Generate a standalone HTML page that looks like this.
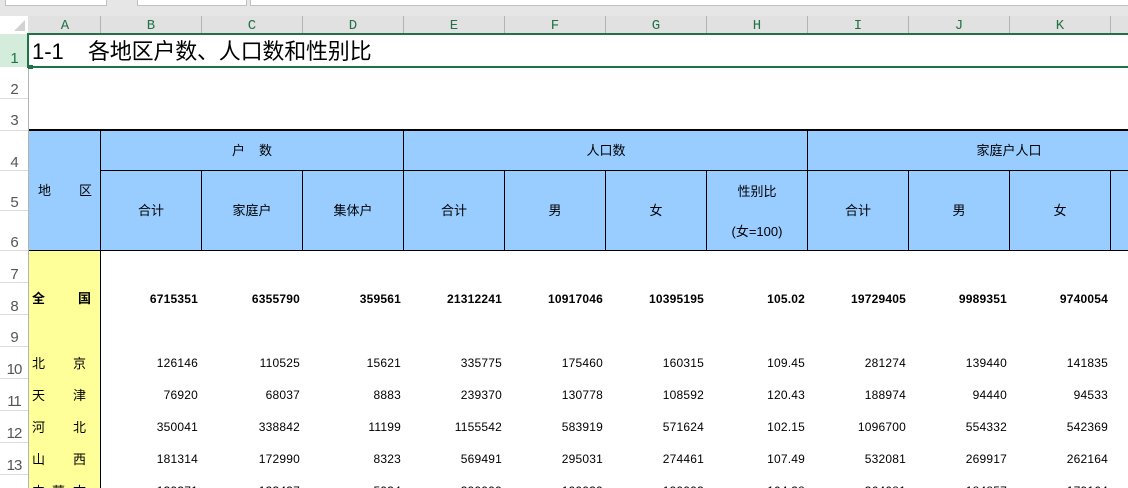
<!DOCTYPE html>
<html lang="zh">
<head>
<meta charset="utf-8">
<title>1-1 各地区户数、人口数和性别比</title>
<style>
html,body{margin:0;padding:0;background:#fff}
#p{position:relative;width:1128px;height:488px;overflow:hidden;background:#fff;font-family:"Liberation Sans","Noto Sans CJK SC",sans-serif;color:#000}
#p div,#p span{position:absolute}
.f{background:#000}
.h{background:#b4b4b4;top:16px;width:1px;height:17px}
.c{top:18px;width:30px;height:17px;text-align:center;font:14px/17px "Liberation Mono",monospace;color:#217346}
.n{left:0;width:28px;height:14px;line-height:14px;text-align:center;font-size:15px;letter-spacing:-1px;color:#555}
.s{left:0;width:28px;height:1px;background:#dadada}
.t{font-size:13px;line-height:16px;height:16px;white-space:nowrap;text-align:center}
.r{left:0;width:1128px;height:14px;font-size:12px;line-height:14px;letter-spacing:.2px}
.r span{top:0;width:96px;text-align:right;white-space:nowrap}
.r span:nth-child(1){left:102px}
.r span:nth-child(2){left:204px}
.r span:nth-child(3){left:305px}
.r span:nth-child(4){left:406px}
.r span:nth-child(5){left:507px}
.r span:nth-child(6){left:608px}
.r span:nth-child(7){left:709px}
.r span:nth-child(8){left:810px}
.r span:nth-child(9){left:911px}
.r span:nth-child(10){left:1012px}
.b{font-weight:bold}
.l{font-size:13px;line-height:16px;height:16px;white-space:nowrap}
</style>
</head>
<body>
<div id="p">
<!-- top strip -->
<div style="left:0;top:0;width:1128px;height:16px;background:#e6e6e6"></div>
<div style="left:5px;top:0;width:100px;height:5px;background:#fff;border:1px solid #c0c0c0;border-top:0"></div>
<div style="left:137px;top:0;width:108px;height:5px;background:#fff;border:1px solid #c0c0c0;border-top:0"></div>
<div style="left:250px;top:0;width:880px;height:5px;background:#fff;border:1px solid #c0c0c0;border-top:0"></div>
<!-- column header -->
<div style="left:0;top:16px;width:28px;height:17px;background:#fff"></div>
<div style="left:14px;top:20px;width:0;height:0;border-left:11px solid transparent;border-bottom:11px solid #d2d2d2"></div>
<div style="left:28px;top:16px;width:1100px;height:17px;background:#e1e1e1"></div>
<div class="h" style="left:100px"></div><div class="h" style="left:201px"></div><div class="h" style="left:302px"></div><div class="h" style="left:403px"></div><div class="h" style="left:504px"></div><div class="h" style="left:605px"></div><div class="h" style="left:706px"></div><div class="h" style="left:807px"></div><div class="h" style="left:908px"></div><div class="h" style="left:1009px"></div><div class="h" style="left:1110px"></div>
<div class="c" style="left:50px">A</div><div class="c" style="left:136px">B</div><div class="c" style="left:237px">C</div><div class="c" style="left:338px">D</div><div class="c" style="left:439px">E</div><div class="c" style="left:540px">F</div><div class="c" style="left:641px">G</div><div class="c" style="left:742px">H</div><div class="c" style="left:843px">I</div><div class="c" style="left:944px">J</div><div class="c" style="left:1045px">K</div>
<!-- row header -->
<div style="left:0;top:34px;width:28px;height:33px;background:#d3ecdc"></div>
<div style="left:28px;top:67px;width:1px;height:421px;background:#b4b4b4"></div>
<div class="s" style="top:98px"></div><div class="s" style="top:130px"></div><div class="s" style="top:170px"></div><div class="s" style="top:210px"></div><div class="s" style="top:250px"></div><div class="s" style="top:282px"></div><div class="s" style="top:314px"></div><div class="s" style="top:346px"></div><div class="s" style="top:378px"></div><div class="s" style="top:410px"></div><div class="s" style="top:442px"></div><div class="s" style="top:474px"></div>
<div class="n" style="top:52px;color:#217346">1</div><div class="n" style="top:83px">2</div><div class="n" style="top:114px">3</div><div class="n" style="top:156px">4</div><div class="n" style="top:196px">5</div><div class="n" style="top:236px">6</div><div class="n" style="top:268px">7</div><div class="n" style="top:300px">8</div><div class="n" style="top:331px">9</div><div class="n" style="top:363px">10</div><div class="n" style="top:395px">11</div><div class="n" style="top:427px">12</div><div class="n" style="top:459px">13</div>
<!-- selected title row -->
<div style="left:28px;top:33px;width:1100px;height:2px;background:#217346"></div>
<div style="left:28px;top:66px;width:1100px;height:2px;background:#217346"></div>
<div style="left:27px;top:33px;width:2px;height:35px;background:#217346"></div>
<div style="left:28px;top:65px;width:5px;height:4px;background:#217346"></div>
<div style="left:32px;top:38px;height:28px;line-height:28px;font-size:22px;white-space:nowrap">1-1</div>
<div style="left:88px;top:38px;height:28px;line-height:28px;font-size:22px;white-space:nowrap;letter-spacing:-.2px">各地区户数、人口数和性别比</div>
<!-- header block -->
<div style="left:29px;top:129px;width:1099px;height:121px;background:#99ccff"></div>
<div class="f" style="left:29px;top:129px;width:1099px;height:2px"></div>
<div class="f" style="left:29px;top:250px;width:1099px;height:1px"></div>
<div class="f" style="left:101px;top:170px;width:1027px;height:1px"></div>
<div class="f" style="left:100px;top:131px;width:1px;height:357px"></div>
<div class="f" style="left:403px;top:131px;width:1px;height:119px"></div>
<div class="f" style="left:807px;top:131px;width:1px;height:119px"></div>
<div class="f" style="left:201px;top:170px;width:1px;height:80px"></div>
<div class="f" style="left:302px;top:170px;width:1px;height:80px"></div>
<div class="f" style="left:504px;top:170px;width:1px;height:80px"></div>
<div class="f" style="left:605px;top:170px;width:1px;height:80px"></div>
<div class="f" style="left:706px;top:170px;width:1px;height:80px"></div>
<div class="f" style="left:908px;top:170px;width:1px;height:80px"></div>
<div class="f" style="left:1009px;top:170px;width:1px;height:80px"></div>
<div class="f" style="left:1110px;top:170px;width:1px;height:80px"></div>
<div class="t" style="left:232px;top:143px">户</div><div class="t" style="left:259px;top:143px">数</div>
<div class="t" style="left:38px;top:183px">地</div><div class="t" style="left:79px;top:183px">区</div>
<div class="t" style="left:486px;top:143px;width:240px">人口数</div>
<div class="t" style="left:889px;top:143px;width:240px">家庭户人口</div>
<div class="t" style="left:101px;top:203px;width:100px">合计</div>
<div class="t" style="left:202px;top:203px;width:100px">家庭户</div>
<div class="t" style="left:303px;top:203px;width:100px">集体户</div>
<div class="t" style="left:404px;top:203px;width:100px">合计</div>
<div class="t" style="left:505px;top:203px;width:100px">男</div>
<div class="t" style="left:606px;top:203px;width:100px">女</div>
<div class="t" style="left:707px;top:184px;width:100px">性别比</div>
<div class="t" style="left:707px;top:224px;width:100px">(女=100)</div>
<div class="t" style="left:808px;top:203px;width:100px">合计</div>
<div class="t" style="left:909px;top:203px;width:100px">男</div>
<div class="t" style="left:1010px;top:203px;width:100px">女</div>
<!-- yellow column -->
<div style="left:29px;top:251px;width:71px;height:237px;background:#ffff99"></div>
<div class="l b" style="left:32px;top:291px">全</div><div class="l b" style="left:78px;top:291px">国</div>
<div class="l" style="left:32px;top:356px">北</div><div class="l" style="left:73px;top:356px">京</div>
<div class="l" style="left:32px;top:388px">天</div><div class="l" style="left:73px;top:388px">津</div>
<div class="l" style="left:32px;top:420px">河</div><div class="l" style="left:73px;top:420px">北</div>
<div class="l" style="left:32px;top:452px">山</div><div class="l" style="left:73px;top:452px">西</div>
<div class="l" style="left:32px;top:484px">内</div><div class="l" style="left:52px;top:484px">蒙</div><div class="l" style="left:73px;top:484px">古</div>
<!-- data -->
<div class="r b" style="top:292px"><span>6715351</span><span>6355790</span><span>359561</span><span>21312241</span><span>10917046</span><span>10395195</span><span>105.02</span><span>19729405</span><span>9989351</span><span>9740054</span></div>
<div class="r" style="top:356px"><span>126146</span><span>110525</span><span>15621</span><span>335775</span><span>175460</span><span>160315</span><span>109.45</span><span>281274</span><span>139440</span><span>141835</span></div>
<div class="r" style="top:388px"><span>76920</span><span>68037</span><span>8883</span><span>239370</span><span>130778</span><span>108592</span><span>120.43</span><span>188974</span><span>94440</span><span>94533</span></div>
<div class="r" style="top:420px"><span>350041</span><span>338842</span><span>11199</span><span>1155542</span><span>583919</span><span>571624</span><span>102.15</span><span>1096700</span><span>554332</span><span>542369</span></div>
<div class="r" style="top:452px"><span>181314</span><span>172990</span><span>8323</span><span>569491</span><span>295031</span><span>274461</span><span>107.49</span><span>532081</span><span>269917</span><span>262164</span></div>
<div class="r" style="top:484px"><span>139371</span><span>133437</span><span>5934</span><span>399999</span><span>199939</span><span>199993</span><span>104.38</span><span>364081</span><span>184857</span><span>179164</span></div>
</div>
</body>
</html>
